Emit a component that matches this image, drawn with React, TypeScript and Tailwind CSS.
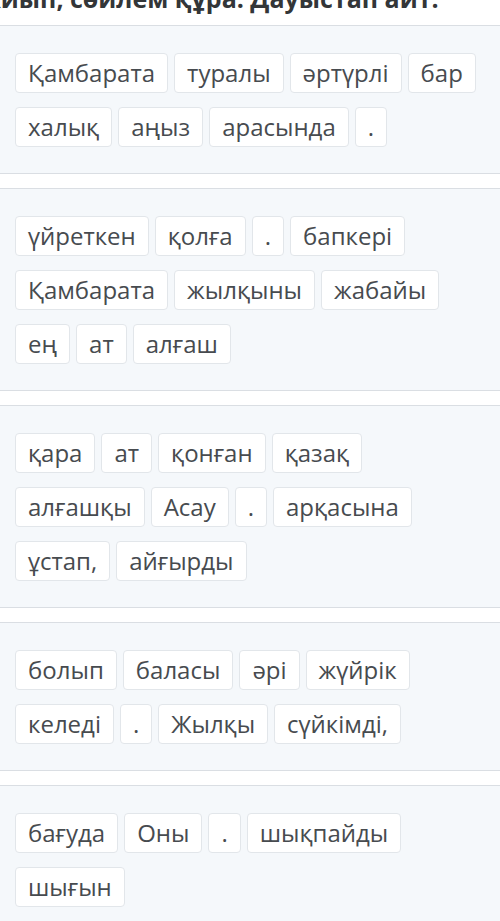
import React from 'react';

const groups: string[][] = [
  ['Қамбарата', 'туралы', 'әртүрлі', 'бар', 'халық', 'аңыз', 'арасында', '.'],
  ['үйреткен', 'қолға', '.', 'бапкері', 'Қамбарата', 'жылқыны', 'жабайы', 'ең', 'ат', 'алғаш'],
  ['қара', 'ат', 'қонған', 'қазақ', 'алғашқы', 'Асау', '.', 'арқасына', 'ұстап,', 'айғырды'],
  ['болып', 'баласы', 'әрі', 'жүйрік', 'келеді', '.', 'Жылқы', 'сүйкімді,'],
  ['бағуда', 'Оны', '.', 'шықпайды', 'шығын'],
];

const WordChip: React.FC<{ word: string }> = ({ word }) => (
  <div className="h-[40px] px-[12px] flex items-center bg-white border border-[#e2e6ea] rounded-[4px] text-[24px] text-[#474b4f] leading-none cursor-grab select-none">
    {word}
  </div>
);

export default function App() {
  return (
    <div className="w-[500px] min-h-[921px] bg-white overflow-hidden" style={{ fontFamily: '"Open Sans", "Noto Sans", sans-serif' }}>
      {/* instruction, scrolled so only its lower half shows */}
      <div className="h-[25px] overflow-hidden">
        <div className="-mt-[18px] -ml-[21px] whitespace-nowrap text-[25px] leading-[32px] font-bold text-[#333638]">
          жиып, сөйлем құра. Дауыстап айт.
        </div>
      </div>

      <div className="flex flex-col gap-[14px]">
        {groups.map((words, gi) => (
          <div key={gi} className="bg-[#f5f8fb] border-y border-[#dadee3] pt-[27px] pb-[26px] px-[15px]">
            <div className="flex flex-wrap gap-x-[6px] gap-y-[14px]">
              {words.map((w, wi) => (
                <WordChip key={wi} word={w} />
              ))}
            </div>
          </div>
        ))}
      </div>
    </div>
  );
}
